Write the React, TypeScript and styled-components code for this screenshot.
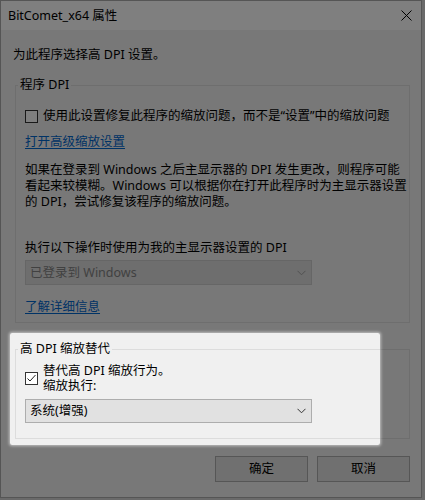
import React from "react";
import styled, { createGlobalStyle } from "styled-components";

const GlobalStyle = createGlobalStyle`
  html, body {
    margin: 0;
    padding: 0;
    background: #d4d4d4;
  }
  body {
    font-family: "Noto Sans", "Noto Sans CJK SC", sans-serif;
    font-size: 12.5px;
    color: #000;
  }
`;

const Screen = styled.div`
  position: relative;
  width: 425px;
  height: 500px;
  overflow: hidden;
`;

const Window = styled.div`
  width: 422px;
  height: 498px;
  box-sizing: border-box;
  border: 1px solid #aaaaaa;
  background: #f0f0f0;
  display: flex;
  flex-direction: column;
`;

const TitleBar = styled.div`
  height: 29px;
  background: #ffffff;
  display: flex;
  align-items: center;
  justify-content: space-between;
  padding: 0 9px 0 7px;
  line-height: 16px;
`;

const CloseIcon = styled.svg`
  width: 11px;
  height: 11px;
`;

const Body = styled.div`
  flex: 1;
  padding: 17px 11px 0 12px;
  display: flex;
  flex-direction: column;
`;

const Text = styled.div`
  line-height: 16px;
  white-space: nowrap;
`;

const Group = styled.fieldset<{ $top: number; $bottom: number }>`
  margin: ${(p) => p.$top}px 0 0 2px;
  width: 395px;
  box-sizing: border-box;
  border: 1px solid #dcdcdc;
  padding: 0 0 ${(p) => p.$bottom}px 2px;
  min-width: 0;
`;

const Legend = styled.legend`
  padding: 0 2px;
  line-height: 16px;
`;

const Inner = styled.div<{ $top: number }>`
  padding: ${(p) => p.$top}px 0 0 7px;
  display: flex;
  flex-direction: column;
  align-items: flex-start;
`;

const CheckRow = styled.label`
  display: flex;
  align-items: center;
  gap: 5px;
`;

const Box = styled.span`
  width: 13px;
  height: 13px;
  box-sizing: border-box;
  border: 1px solid #333333;
  background: #ffffff;
  display: flex;
  align-items: center;
  justify-content: center;
  flex: none;
`;

const CheckLabel = styled.div<{ $lh: number }>`
  line-height: ${(p) => p.$lh}px;
  white-space: nowrap;
`;

const Link = styled.a<{ $top: number }>`
  margin-top: ${(p) => p.$top}px;
  line-height: 16px;
  color: #0066cc;
  text-decoration: underline;
  text-underline-offset: 2px;
`;

const Para = styled.div<{ $top: number }>`
  margin-top: ${(p) => p.$top}px;
  line-height: 16px;
  white-space: nowrap;
`;

const Select = styled.div<{ $top: number; $disabled?: boolean; $h: number }>`
  margin-top: ${(p) => p.$top}px;
  width: 287px;
  height: ${(p) => p.$h}px;
  box-sizing: border-box;
  border: 1px solid ${(p) => (p.$disabled ? "#cccccc" : "#adadad")};
  background: ${(p) => (p.$disabled ? "#dcdcdc" : "#e1e1e1")};
  color: ${(p) => (p.$disabled ? "#838383" : "#000000")};
  display: flex;
  align-items: center;
  justify-content: space-between;
  padding: 0 5px 0 4px;
  line-height: 16px;
`;

const Chevron = styled.svg`
  width: 9px;
  height: 6px;
`;

const Buttons = styled.div`
  margin-top: 17px;
  display: flex;
  justify-content: flex-end;
  gap: 9px;
`;

const Button = styled.button`
  width: 93px;
  height: 26px;
  box-sizing: border-box;
  border: 1px solid #adadad;
  background: #e1e1e1;
  font: inherit;
  line-height: 16px;
  color: #000;
  padding: 0;
`;

const Spotlight = styled.div`
  position: absolute;
  left: 10px;
  top: 333px;
  width: 370px;
  height: 112px;
  border-radius: 2px;
  pointer-events: none;
  box-shadow: 0 0 3px 1px rgba(255, 255, 255, 0.55),
    0 0 4px 2000px rgba(0, 0, 0, 0.5);
`;

const ChevronDown = ({ color }: { color: string }) => (
  <Chevron viewBox="0 0 9 6">
    <path d="M0.5 0.8 L4.5 4.8 L8.5 0.8" fill="none" stroke={color} strokeWidth="1" />
  </Chevron>
);

export default function App() {
  return (
    <Screen>
      <GlobalStyle />
      <Window>
        <TitleBar>
          <span>BitComet_x64 属性</span>
          <CloseIcon viewBox="0 0 11 11">
            <path d="M0.5 0.5 L10.5 10.5 M10.5 0.5 L0.5 10.5" stroke="#000" strokeWidth="1" />
          </CloseIcon>
        </TitleBar>
        <Body>
          <Text>为此程序选择高 DPI 设置。</Text>

          <Group $top={14} $bottom={7}>
            <Legend>程序 DPI</Legend>
            <Inner $top={15}>
              <CheckRow>
                <Box />
                <CheckLabel $lh={16}>使用此设置修复此程序的缩放问题，而不是“设置”中的缩放问题</CheckLabel>
              </CheckRow>
              <Link $top={10}>打开高级缩放设置</Link>
              <Para $top={12}>
                如果在登录到 Windows 之后主显示器的 DPI 发生更改，则程序可能
                <br />
                看起来较模糊。Windows 可以根据你在打开此程序时为主显示器设置
                <br />
                的 DPI，尝试修复该程序的缩放问题。
              </Para>
              <Para $top={30}>执行以下操作时使用为我的主显示器设置的 DPI</Para>
              <Select $top={4} $h={25} $disabled>
                <span>已登录到 Windows</span>
                <ChevronDown color="#a0a0a0" />
              </Select>
              <Link $top={14}>了解详细信息</Link>
            </Inner>
          </Group>

          <Group $top={18} $bottom={15}>
            <Legend>高 DPI 缩放替代</Legend>
            <Inner $top={6}>
              <CheckRow>
                <Box>
                  <svg width="11" height="11" viewBox="0 0 11 11">
                    <path d="M1.5 5.5 L4 8 L9.5 2" fill="none" stroke="#222" strokeWidth="1" />
                  </svg>
                </Box>
                <CheckLabel $lh={15}>
                  替代高 DPI 缩放行为。
                  <br />
                  缩放执行:
                </CheckLabel>
              </CheckRow>
              <Select $top={6} $h={24}>
                <span>系统(增强)</span>
                <ChevronDown color="#333" />
              </Select>
            </Inner>
          </Group>

          <Buttons>
            <Button>确定</Button>
            <Button>取消</Button>
          </Buttons>
        </Body>
      </Window>
      <Spotlight />
    </Screen>
  );
}
